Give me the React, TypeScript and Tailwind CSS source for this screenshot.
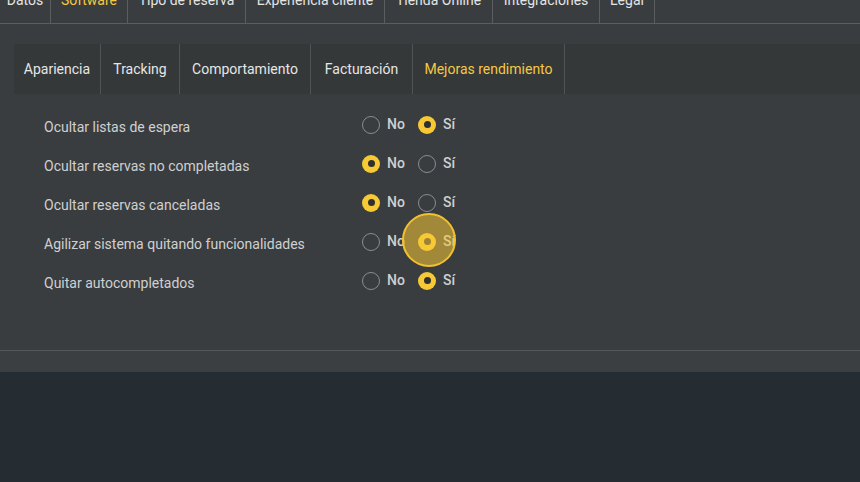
const topTabs = [
  { label: 'Datos', w: 'w-[51px]' },
  { label: 'Software', w: 'w-[77px]', active: true },
  { label: 'Tipo de reserva', w: 'w-[118px]' },
  { label: 'Experiencia cliente', w: 'w-[139px]' },
  { label: 'Tienda Online', w: 'w-[108px]' },
  { label: 'Integraciones', w: 'w-[107px]' },
  { label: 'Legal', w: 'w-[55px]' },
];

const subTabs = [
  { label: 'Apariencia', w: 'w-[87px]' },
  { label: 'Tracking', w: 'w-[79px]' },
  { label: 'Comportamiento', w: 'w-[131px]' },
  { label: 'Facturación', w: 'w-[102px]' },
  { label: 'Mejoras rendimiento', w: 'w-[152px]', active: true },
];

const options = [
  { label: 'Ocultar listas de espera', value: 'si' },
  { label: 'Ocultar reservas no completadas', value: 'no' },
  { label: 'Ocultar reservas canceladas', value: 'no' },
  { label: 'Agilizar sistema quitando funcionalidades', value: 'si' },
  { label: 'Quitar autocompletados', value: 'si' },
];

function Radio({ checked, text }: { checked: boolean; text: string }) {
  return (
    <div className="w-[56px] flex items-center gap-[7px]">
      {checked ? (
        <span className="w-[18px] h-[18px] rounded-full bg-[#f7c934] flex items-center justify-center">
          <span className="w-[7px] h-[7px] rounded-full bg-[#2e3032]" />
        </span>
      ) : (
        <span className="w-[18px] h-[18px] rounded-full border-[1.5px] border-[#8a8d8f]" />
      )}
      <span className="text-[14px] font-medium text-[#cfd0d1]">{text}</span>
    </div>
  );
}

export default function App() {
  return (
    <div className="relative w-[860px] h-[482px] overflow-hidden bg-[#252d33] font-['Roboto',sans-serif]">
      <div className="bg-[#3a3d3f]">
        {/* top tabs, scrolled half out of view */}
        <div className="flex h-[24px] border-b border-[#5b5e60]">
          {topTabs.map((t) => (
            <div
              key={t.label}
              className={`${t.w} h-full flex justify-center border-r border-[#5b5e60]`}
            >
              <span
                className={`-mt-[10px] leading-[20px] text-[14px] ${
                  t.active ? 'text-[#f5c842]' : 'text-[#e4e4e4]'
                }`}
              >
                {t.label}
              </span>
            </div>
          ))}
        </div>

        {/* sub tabs */}
        <div className="pt-[20px] pl-[14px]">
          <div className="flex h-[50px] bg-[#353839]">
            {subTabs.map((t) => (
              <div
                key={t.label}
                className={`${t.w} h-full flex items-center justify-center border-r border-[#505355] text-[14px] ${
                  t.active ? 'text-[#f5c842]' : 'text-[#e6e6e6]'
                }`}
              >
                {t.label}
              </div>
            ))}
          </div>
        </div>

        {/* settings */}
        <div className="h-[256px] pt-[11px]">
          {options.map((o) => (
            <div key={o.label} className="flex items-center h-[39px]">
              <div className="w-[362px] pl-[44px] pt-[6px] text-[14px] text-[#cfd0d1]">
                {o.label}
              </div>
              <Radio checked={o.value === 'no'} text="No" />
              <Radio checked={o.value === 'si'} text="Sí" />
            </div>
          ))}
        </div>

        <div className="h-[22px] border-t border-[#56595b] bg-[#3c3f41]" />
      </div>

      {/* click highlight */}
      <div className="absolute left-[402px] top-[213px] w-[54px] h-[54px] rounded-full bg-[#f7c934]/55 border-2 border-[#f2c12e]" />
    </div>
  );
}
